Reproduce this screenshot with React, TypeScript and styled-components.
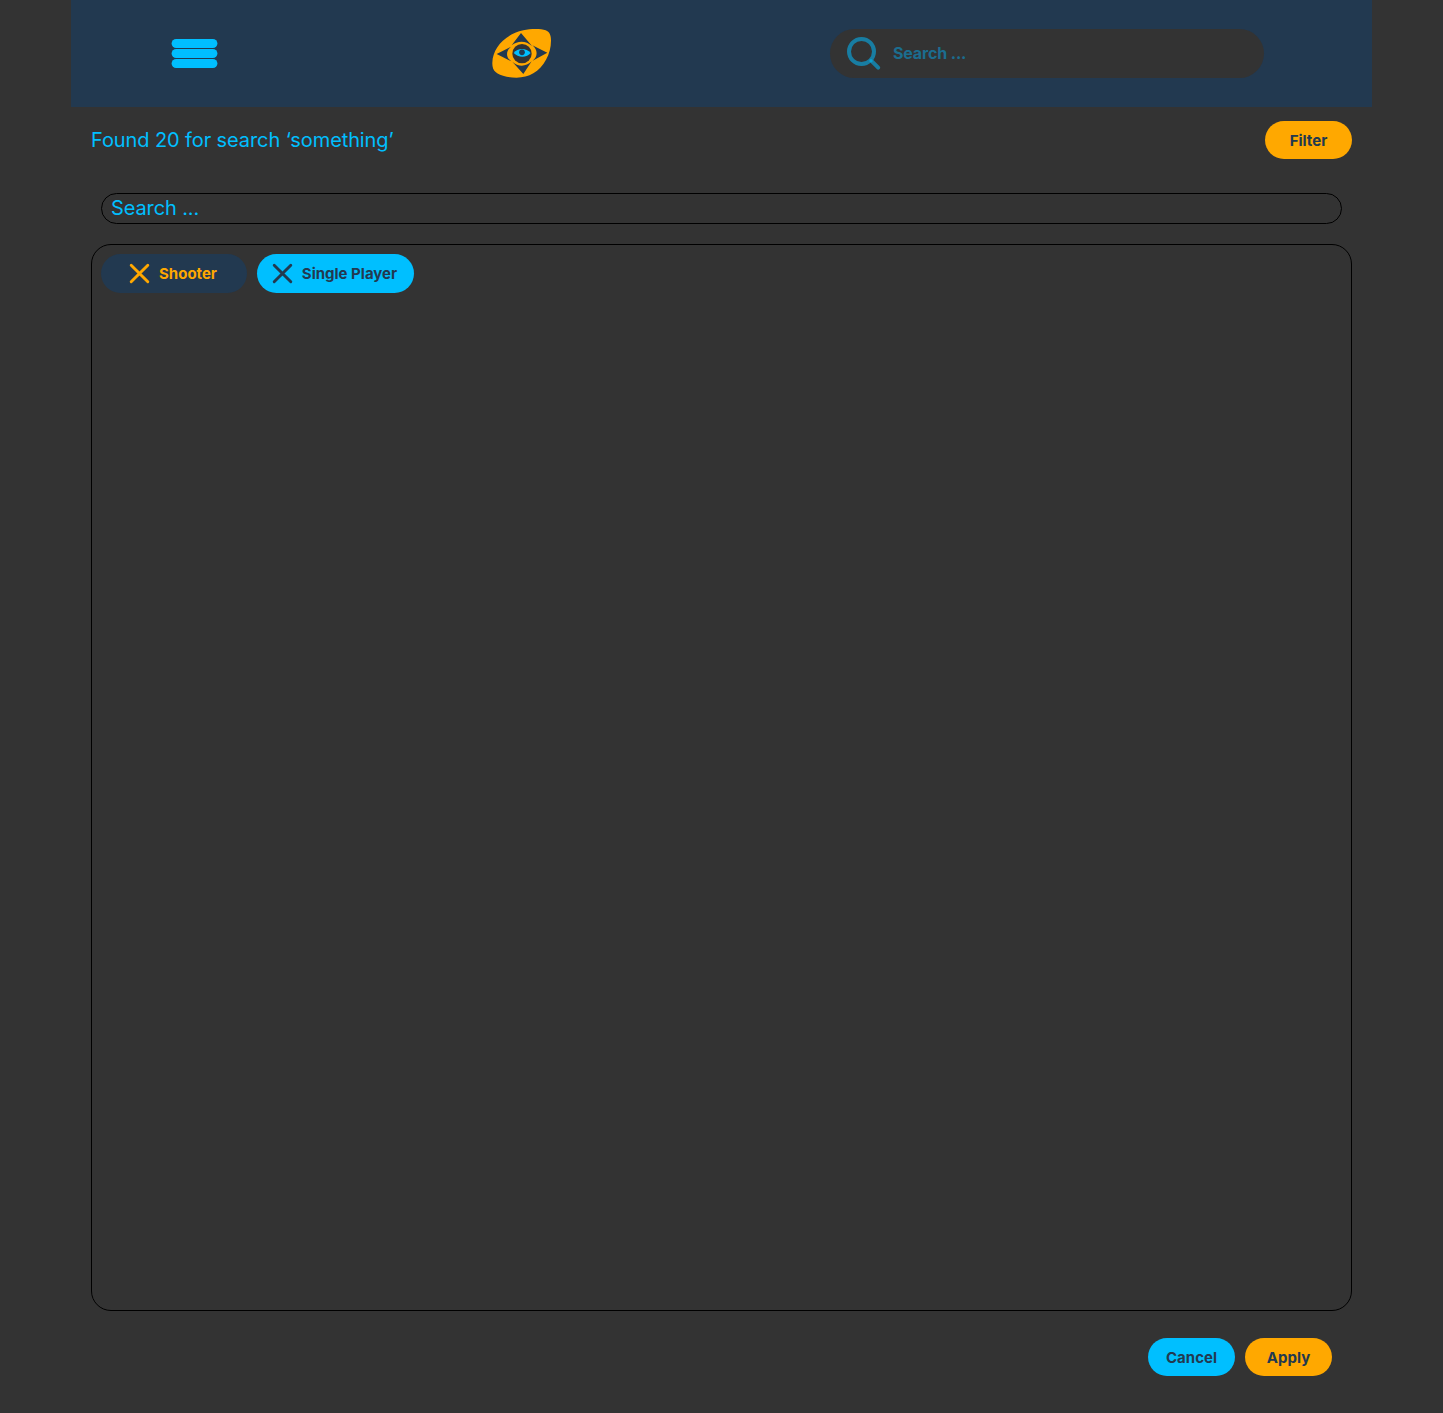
import React from "react";
import styled, { createGlobalStyle } from "styled-components";

const ink = "#333333";
const navy = "#223950";
const cyan = "#00bfff";
const orange = "#ffa800";

const GlobalStyle = createGlobalStyle`
  * { box-sizing: border-box; }
  body { margin: 0; background: ${ink}; font-family: Inter, "Liberation Sans", sans-serif; }
  button, input { font-family: inherit; margin: 0; }
`;

const Page = styled.div`
  width: 1301px;
  min-height: 1413px;
  margin-left: 71px;
  display: flex;
  flex-direction: column;
`;

const Header = styled.header`
  height: 107px;
  padding: 0 108px 0 100px;
  display: flex;
  align-items: center;
  background: ${navy};
`;

const MenuButton = styled.button`
  width: 47px;
  padding: 0;
  border: 0;
  background: none;
`;

const MenuGlyph = styled.svg`
  display: block;
  width: 47px;
  height: 29px;
`;

const Logo = styled.svg`
  display: block;
  width: 80px;
  height: 66px;
  margin: 0 0 1px 262px;
`;

const SearchPill = styled.label`
  width: 434px;
  height: 49px;
  margin-left: auto;
  padding-left: 16px;
  border-radius: 25px;
  display: flex;
  align-items: center;
  gap: 9px;
  background: ${ink};
`;

const SearchGlyph = styled.svg`
  width: 38px;
  height: 38px;
  flex: none;
`;

const HeaderInput = styled.input`
  width: 300px;
  padding: 0 0 2px;
  border: 0;
  outline: 0;
  background: none;
  font-size: 16px;
  font-weight: 700;
  letter-spacing: -0.15px;
  color: ${cyan};
  &::placeholder { color: #1b6d8f; opacity: 1; }
`;

const Content = styled.main`
  padding: 14px 20px 0;
  display: flex;
  flex-direction: column;
`;

const ResultRow = styled.div`
  height: 38px;
  display: flex;
  align-items: center;
  justify-content: space-between;
`;

const ResultText = styled.p`
  margin: 0;
  font-size: 20px;
  letter-spacing: -0.1px;
  line-height: 24px;
  color: ${cyan};
`;

const PillButton = styled.button<{ $fill: string }>`
  width: 87px;
  height: 38px;
  padding: 0;
  border: 0;
  border-radius: 19px;
  background: ${(p) => p.$fill};
  color: ${navy};
  font-size: 15px;
  font-weight: 700;
`;

const TagSearch = styled.input`
  height: 31px;
  margin: 34px 10px 20px;
  padding: 0 9px 1px;
  border: 1px solid #000;
  border-radius: 15.5px;
  outline: 0;
  background: transparent;
  color: ${cyan};
  font-size: 20px;
  letter-spacing: -0.12px;
  &::placeholder { color: ${cyan}; opacity: 1; }
`;

const TagPanel = styled.section`
  height: 1067px;
  padding: 9px;
  border: 1px solid #000;
  border-radius: 20px;
  display: flex;
  align-items: flex-start;
  gap: 10px;
`;

const Tag = styled.button<{ $fill: string; $text: string; $width: number }>`
  width: ${(p) => p.$width}px;
  height: 39px;
  padding: 0 2px 0 0;
  border: 0;
  border-radius: 20px;
  display: flex;
  align-items: center;
  justify-content: center;
  gap: 9px;
  background: ${(p) => p.$fill};
  color: ${(p) => p.$text};
  font-size: 15px;
  font-weight: 700;
`;

const CrossIcon = styled.svg`
  width: 21px;
  height: 21px;
`;

const Actions = styled.footer`
  padding: 27px 20px 0;
  display: flex;
  justify-content: flex-end;
  gap: 10px;
`;

function Cross() {
  return (
    <CrossIcon viewBox="0 0 21 21" fill="none" stroke="currentColor" strokeWidth="2.9" strokeLinecap="round">
      <path d="M2.2 2.2 18.8 18.8M18.8 2.2 2.2 18.8" />
    </CrossIcon>
  );
}

function EyeLogo() {
  return (
    <Logo viewBox="0 0 240 198">
      <path
        fill={orange}
        d="M37 128C38 82 78 42 130 31C152 26 183 26 197 31C209 36 213 46 213 62C213 102 192 140 160 160C138 173 112 176 80 170C48 164 36 152 37 128Z"
      />
      <g fill={navy}>
        <path d="M123 39 156 78C138 61 113 61 95 76Z" />
        <path d="M50 102 93 80C77 94 77 112 94 124Z" />
        <path d="M202 98 157 76C174 90 174 110 158 122Z" />
        <path d="M130 162 97 125C115 141 137 141 155 124Z" />
      </g>
      <circle cx="126" cy="101" r="29" fill={ink} />
      <path fill={cyan} d="M101 99C112 84 139 83 152 99C141 113 115 114 101 99Z" />
      <circle cx="126" cy="97" r="8.5" fill={navy} />
    </Logo>
  );
}

const tags = [
  { label: "Shooter", fill: navy, text: orange, width: 146 },
  { label: "Single Player", fill: cyan, text: navy, width: 157 },
];

export default function App() {
  return (
    <>
      <GlobalStyle />
      <Page>
        <Header>
          <MenuButton aria-label="Menu">
            <MenuGlyph viewBox="0 0 47 29" fill={cyan}>
              <rect x="0.6" y="0" width="45.8" height="9" rx="4.5" />
              <rect x="0.6" y="10" width="45.8" height="9" rx="4.5" />
              <rect x="0.6" y="20" width="45.8" height="9" rx="4.5" />
            </MenuGlyph>
          </MenuButton>
          <EyeLogo />
          <SearchPill>
            <SearchGlyph viewBox="0 0 38 38" fill="none" stroke="#187da2">
              <circle cx="15.5" cy="16.5" r="12.5" strokeWidth="4" />
              <path d="M25.2 25.7 32.2 32.7" strokeWidth="4" strokeLinecap="round" />
              <circle cx="25" cy="25.7" r="1.7" fill="#0b9fd0" stroke="none" />
            </SearchGlyph>
            <HeaderInput placeholder="Search ..." />
          </SearchPill>
        </Header>
        <Content>
          <ResultRow>
            <ResultText>Found 20 for search ‘something’</ResultText>
            <PillButton $fill={orange}>Filter</PillButton>
          </ResultRow>
          <TagSearch placeholder="Search ..." />
          <TagPanel>
            {tags.map((tag) => (
              <Tag key={tag.label} $fill={tag.fill} $text={tag.text} $width={tag.width}>
                <Cross />
                {tag.label}
              </Tag>
            ))}
          </TagPanel>
          <Actions>
            <PillButton $fill={cyan}>Cancel</PillButton>
            <PillButton $fill={orange}>Apply</PillButton>
          </Actions>
        </Content>
      </Page>
    </>
  );
}
